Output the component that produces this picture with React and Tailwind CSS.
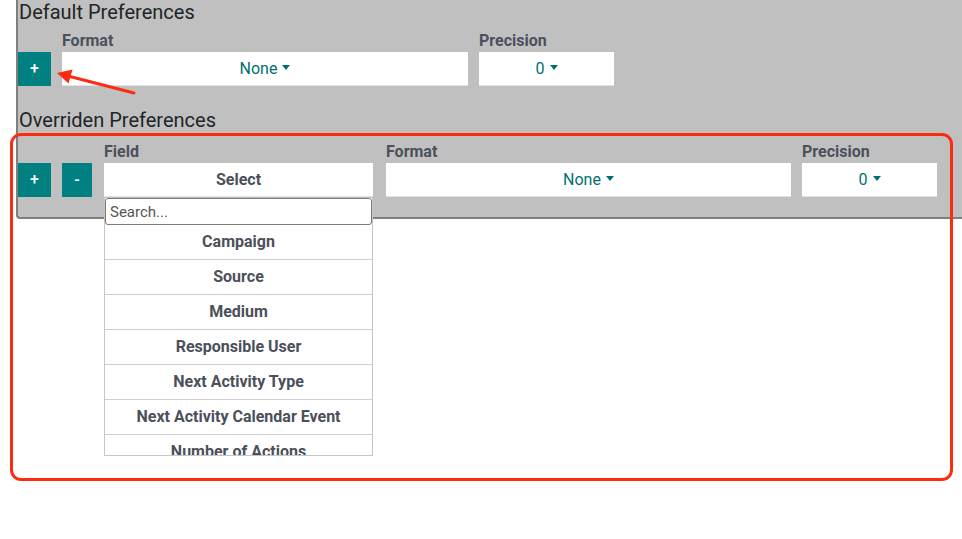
const font = { fontFamily: 'Roboto, "Noto Sans", sans-serif' }

const fields = [
  'Campaign',
  'Source',
  'Medium',
  'Responsible User',
  'Next Activity Type',
  'Next Activity Calendar Event',
  'Number of Actions',
]

function Caret() {
  return <span className="inline-block w-0 h-0 ml-[5px] mb-[3px] align-middle border-x-[4px] border-t-[5px] border-x-transparent border-t-current" />
}

function Dropdown({ value, className = '' }) {
  return (
    <div className={`h-[34px] bg-white border-b border-[#e2e2e2] flex items-center justify-center text-[16px] text-[#00716f] ${className}`}>
      {value}<Caret />
    </div>
  )
}

function Label({ children }) {
  return <div className="h-[21px] leading-[20px] text-[16px] font-bold text-[#4b505a]">{children}</div>
}

function TealBtn({ children, className = '' }) {
  return (
    <button className={`h-[34px] bg-[#008080] text-white text-[16px] font-medium flex items-center justify-center ${className}`}>
      {children}
    </button>
  )
}

export default function App() {
  return (
    <div style={font} className="relative w-[962px] h-[539px] bg-white overflow-hidden text-[#212529]">
      {/* settings panel */}
      <div className="ml-[16px] mr-[-20px] h-[219px] bg-[#c0c0c0] border-l-2 border-b-2 border-[#7f7f7f] rounded-bl-[4px]">
        <h2 className="pl-px h-[24px] leading-[24px] text-[20px] font-normal">Default Preferences</h2>
        <div className="flex items-end mt-[7px]">
          <TealBtn className="w-[33px]">+</TealBtn>
          <div className="ml-[11px] w-[406px]">
            <Label>Format</Label>
            <Dropdown value="None" />
          </div>
          <div className="ml-[11px] w-[135px]">
            <Label>Precision</Label>
            <Dropdown value="0" />
          </div>
        </div>

        <h2 className="pl-px mt-[22px] h-[24px] leading-[24px] text-[20px] font-normal">Overriden Preferences</h2>
        <div className="flex items-end mt-[10px]">
          <TealBtn className="w-[33px]">+</TealBtn>
          <TealBtn className="ml-[11px] w-[30px]">-</TealBtn>
          <div className="ml-[12px] w-[269px] relative">
            <Label>Field</Label>
            <div className="h-[34px] bg-white border-b border-[#e2e2e2] flex items-center justify-center text-[16px] font-bold text-[#4b505a]">
              Select
            </div>
            {/* open select menu */}
            <div className="absolute left-0 top-[56px] w-[269px] h-[258px] bg-white border-x border-b border-[#c6c6c6] overflow-hidden z-10">
              <input
                placeholder="Search..."
                className="block w-[267px] h-[27px] px-[4px] border border-[#7a7a7a] rounded-[3px] text-[15px] text-[#333] placeholder:text-[#555] outline-none"
              />
              {fields.map(f => (
                <div key={f} className="h-[35px] shrink-0 flex items-center justify-center border-b border-[#cfcfcf] text-[16px] font-bold text-[#4b505a]">
                  {f}
                </div>
              ))}
            </div>
          </div>
          <div className="ml-[13px] w-[405px]">
            <Label>Format</Label>
            <Dropdown value="None" />
          </div>
          <div className="ml-[11px] w-[135px]">
            <Label>Precision</Label>
            <Dropdown value="0" />
          </div>
        </div>
      </div>

      {/* annotation: highlight box */}
      <div className="absolute left-[10px] top-[133px] w-[943px] h-[348px] border-[3px] border-[#fb2c12] rounded-[11px] pointer-events-none z-20" />

      {/* annotation: arrow */}
      <svg className="absolute left-0 top-0 z-20 pointer-events-none" width="160" height="110">
        <line x1="134" y1="93" x2="68" y2="76" stroke="#fb2c12" strokeWidth="3" strokeLinecap="round" />
        <polygon points="57,73 72.5,69.5 68.5,83.5" fill="#fb2c12" />
      </svg>
    </div>
  )
}
